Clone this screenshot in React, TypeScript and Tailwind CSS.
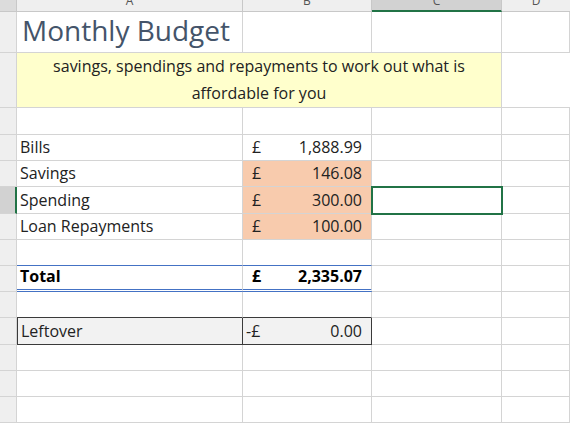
const F = { fontFamily: '"Open Sans", "Liberation Sans", sans-serif' };

type Cell = { text?: string; cls?: string; right?: string; cur?: string };

const widths = ['w-[226px]', 'w-[129px]', 'w-[130px]', 'flex-1'];

function Row({ h, cells, sel }: { h: string; cells: Cell[]; sel?: boolean }) {
  return (
    <div className={`flex ${h}`}>
      <div
        className={`w-[17px] shrink-0 border-b border-r border-[#d4d4d4] ${
          sel ? 'bg-[#d2d2d2] border-r-2 border-r-[#217346]' : 'bg-[#efefef]'
        }`}
      />
      {widths.map((w, i) => {
        const c = cells[i] || {};
        return (
          <div
            key={i}
            className={`${w} shrink-0 border-b border-r border-[#d4d4d4] flex items-end pb-[1px] px-[3px] text-[16px] text-[#222] overflow-visible ${c.cls || ''}`}
          >
            {c.cur !== undefined ? (
              <div className="flex w-full justify-between pl-[6px] pr-[6px]">
                <span>{c.cur}</span>
                <span>{c.right}</span>
              </div>
            ) : (
              <span className="whitespace-nowrap">{c.text}</span>
            )}
          </div>
        );
      })}
    </div>
  );
}

export default function App() {
  const orange = 'bg-[#f8cbad] text-[#5a4a55]';
  return (
    <div className="w-[570px] h-[428px] overflow-hidden bg-white" style={F}>
      {/* column headers */}
      <div className="flex h-[12px] bg-[#efefef] text-[12px] text-[#555] leading-[12px] overflow-hidden">
        <div className="w-[17px] shrink-0 border-r border-b border-[#c8c8c8] bg-[#dcdcdc]" />
        <div className="w-[226px] shrink-0 border-r border-b border-[#c8c8c8] flex justify-center"><span className="-translate-y-[5px]">A</span></div>
        <div className="w-[129px] shrink-0 border-r border-b border-[#c8c8c8] flex justify-center"><span className="-translate-y-[5px]">B</span></div>
        <div className="w-[130px] shrink-0 border-r border-b-2 border-b-[#217346] border-[#c8c8c8] bg-[#d2d2d2] flex justify-center"><span className="-translate-y-[5px]">C</span></div>
        <div className="flex-1 border-b border-[#c8c8c8] flex justify-center"><span className="-translate-y-[5px]">D</span></div>
      </div>
      <Row h="h-[41px]" cells={[{ text: 'Monthly Budget', cls: 'text-[28px] text-[#44546a] pb-[1px] pl-[5px]' }]} />
      {/* merged yellow row */}
      <div className="flex h-[55px]">
        <div className="w-[17px] shrink-0 border-b border-r border-[#d4d4d4] bg-[#efefef]" />
        <div className="w-[485px] shrink-0 bg-[#ffffcc] border-b border-r border-[#d4d4d4] flex items-center justify-center text-center text-[16px] leading-[27px] text-[#222]">
          savings, spendings and repayments to work out what is<br />affordable for you
        </div>
        <div className="flex-1 border-b border-[#d4d4d4]" />
      </div>
      <Row h="h-[27px]" cells={[]} />
      <Row h="h-[26px]" cells={[{ text: 'Bills' }, { cur: '£', right: '1,888.99' }]} />
      <Row h="h-[26px]" cells={[{ text: 'Savings' }, { cur: '£', right: '146.08', cls: orange }]} />
      <Row
        h="h-[27px]"
        sel
        cells={[
          { text: 'Spending' },
          { cur: '£', right: '300.00', cls: orange },
          { cls: 'relative outline-2 outline-[#217346] -outline-offset-1' },
        ]}
      />
      <Row h="h-[26px]" cells={[{ text: 'Loan Repayments' }, { cur: '£', right: '100.00', cls: orange }]} />
      <Row h="h-[26px]" cells={[{ cls: 'border-b-[#4472c4]' }, { cls: 'border-b-[#4472c4]' }]} />
      <Row
        h="h-[26px]"
        cells={[
          { text: 'Total', cls: 'font-bold text-black border-b-[3px] border-double border-b-[#4472c4]' },
          { cur: '£', right: '2,335.07', cls: 'font-bold text-black border-b-[3px] border-double border-b-[#4472c4]' },
        ]}
      />
      <Row h="h-[26px]" cells={[{ cls: 'border-b-[#3a3a3a]' }, { cls: 'border-b-[#3a3a3a]' }]} />
      <Row
        h="h-[27px]"
        cells={[
          { text: 'Leftover', cls: 'bg-[#f2f2f2] text-[#3a3a3a] border-l border-l-[#3a3a3a] border-r-[#3a3a3a] border-b-[#3a3a3a]' },
          { cur: '-£', right: '0.00', cls: 'bg-[#f2f2f2] text-[#3a3a3a] border-r-[#3a3a3a] border-b-[#3a3a3a] [&>div]:pl-0' },
        ]}
      />
      <Row h="h-[26px]" cells={[]} />
      <Row h="h-[26px]" cells={[]} />
      <Row h="h-[26px]" cells={[]} />
    </div>
  );
}
